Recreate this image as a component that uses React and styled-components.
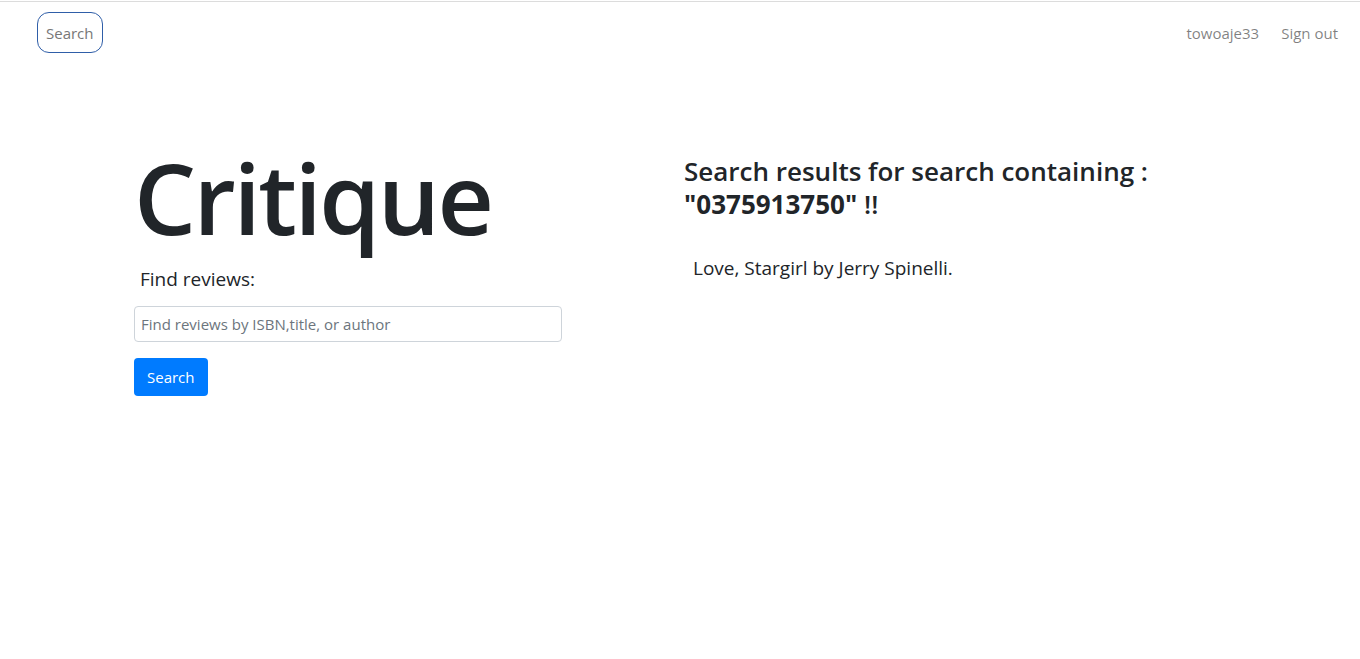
import React, { useState } from "react"
import styled, { createGlobalStyle } from "styled-components"

const GlobalStyle = createGlobalStyle`
  body {
    margin: 0;
    background: #fff;
    font-family: "Open Sans", "Noto Sans", sans-serif;
    color: #212529;
  }
`

const TopLine = styled.div`
  margin-top: 1px;
  height: 1px;
  background-color: #dcdcdc;
`

const Nav = styled.nav`
  display: flex;
  align-items: center;
  justify-content: space-between;
  padding: 10px 22px 0 37px;
`

const NavSearch = styled.button`
  height: 41px;
  padding: 0 8px;
  background: #fff;
  border: 1px solid #2f5ea8;
  border-radius: 12px;
  color: #777;
  font-family: inherit;
  font-size: 15px;
`

const NavLinks = styled.div`
  display: flex;
  gap: 22px;
`

const NavLink = styled.a`
  color: rgba(0, 0, 0, 0.5);
  font-size: 15px;
  text-decoration: none;
`

const Container = styled.main`
  width: 1140px;
  margin: 0 auto;
  padding: 86px 0 0 24px;
  box-sizing: border-box;
  display: grid;
  grid-template-columns: 550px 1fr;
`

const Column = styled.section`
  display: flex;
  flex-direction: column;
  align-items: flex-start;
`

const Title = styled.h1`
  margin: 0;
  font-size: 98px;
  font-weight: 600;
  line-height: 1.2;
  letter-spacing: -2.5px;
`

const Label = styled.label`
  margin: 9px 0 14px 6px;
  font-size: 19px;
`

const Input = styled.input`
  width: 428px;
  height: 36px;
  padding: 6px;
  box-sizing: border-box;
  border: 1px solid #ced4da;
  border-radius: 4px;
  font-family: inherit;
  font-size: 15px;
  color: #495057;

  &::placeholder {
    color: #6c757d;
  }
`

const Button = styled.button`
  margin-top: 16px;
  height: 38px;
  padding: 0 13px;
  background-color: #007bff;
  border: none;
  border-radius: 4px;
  color: #fff;
  font-family: inherit;
  font-size: 15px;
  cursor: pointer;
`

const ResultsHeading = styled.h3`
  margin: 16px 0 0;
  font-size: 26px;
  font-weight: 600;
  line-height: 33px;

  b {
    font-weight: 700;
  }
`

const Result = styled.p`
  margin: 34px 0 0 9px;
  font-size: 19px;
`

export default function App() {
  const [query, setQuery] = useState("")

  return (
    <>
      <GlobalStyle />
      <TopLine />
      <Nav>
        <NavSearch>Search</NavSearch>
        <NavLinks>
          <NavLink href="#">towoaje33</NavLink>
          <NavLink href="#">Sign out</NavLink>
        </NavLinks>
      </Nav>
      <Container>
        <Column>
          <Title>Critique</Title>
          <Label htmlFor="q">Find reviews:</Label>
          <Input
            id="q"
            value={query}
            onChange={(e) => setQuery(e.target.value)}
            placeholder="Find reviews by ISBN,title, or author"
          />
          <Button>Search</Button>
        </Column>
        <Column>
          <ResultsHeading>
            Search results for search containing :
            <br />
            <b>"0375913750"</b> !!
          </ResultsHeading>
          <Result>Love, Stargirl by Jerry Spinelli.</Result>
        </Column>
      </Container>
    </>
  )
}
